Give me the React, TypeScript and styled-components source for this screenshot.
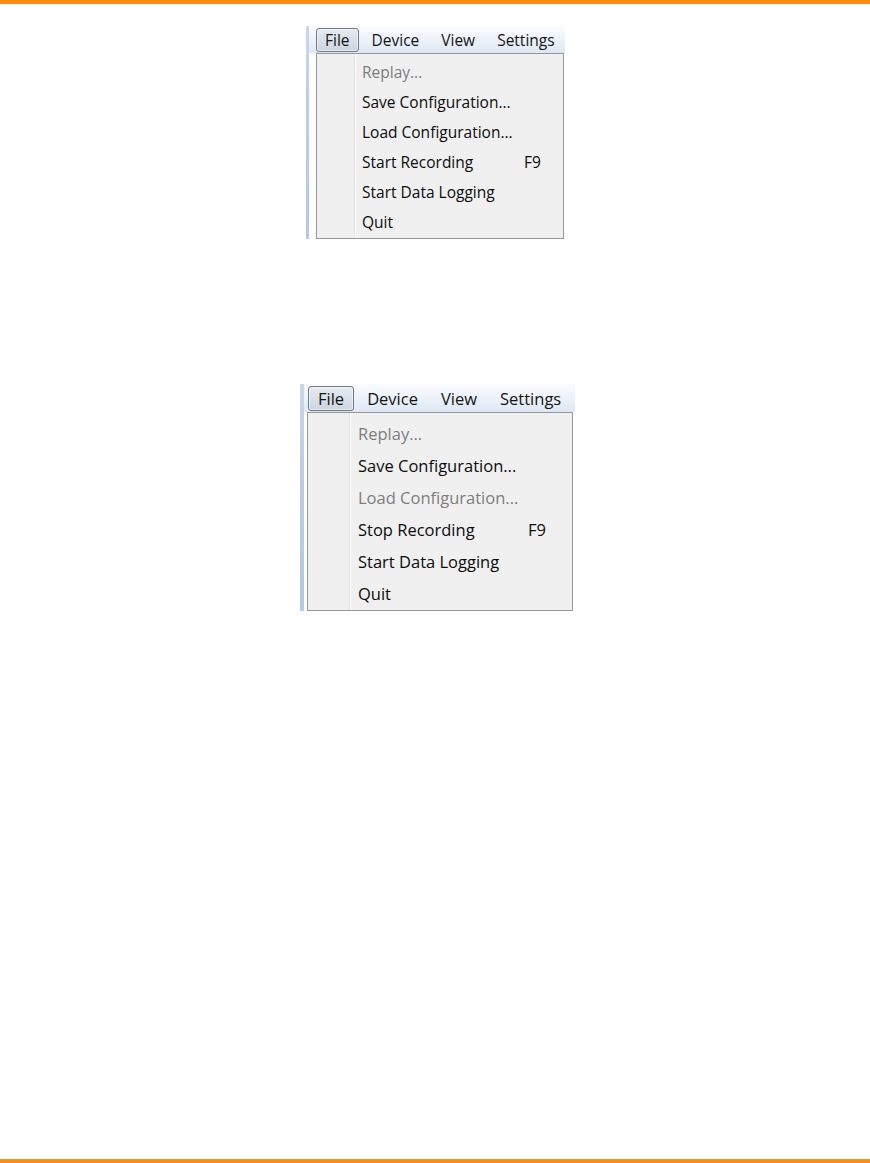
import React from "react";
import styled, { createGlobalStyle } from "styled-components";

const GlobalStyle = createGlobalStyle`
  html, body { margin: 0; padding: 0; background: #ffffff; }
  body { font-family: "Open Sans", "Noto Sans", sans-serif; }
`;

type Cfg = {
  font: number;
  barH: number;
  stripW: number;
  barW: number;
  ddInset: number;
  ddW: number;
  rowH: number;
  padTop: number;
  padBottom: number;
  sepX: number;
  textX: number;
  labelW: number;
  itemPad: number;
  itemGap: number;
  firstInset: number;
};

const Page = styled.div`
  width: 870px;
  height: 1163px;
  display: flex;
  flex-direction: column;
  box-sizing: border-box;
  border-top: 4px solid #ff8a14;
  border-bottom: 4px solid #ff8a14;
`;

const Section = styled.div<{ $top: number; $left: number }>`
  margin-top: ${(p) => p.$top}px;
  margin-left: ${(p) => p.$left}px;
  display: flex;
`;

const Strip = styled.div<{ $w: number }>`
  width: ${(p) => p.$w}px;
  background: linear-gradient(to bottom, #c9d8ec 0%, #b9cde6 40%, #b4c9e4 100%);
`;

const Column = styled.div`
  display: flex;
  flex-direction: column;
`;

const Bar = styled.div<{ $h: number; $w: number; $gap: number; $inset: number }>`
  height: ${(p) => p.$h}px;
  width: ${(p) => p.$w}px;
  display: flex;
  align-items: center;
  gap: ${(p) => p.$gap}px;
  padding-left: ${(p) => p.$inset}px;
  box-sizing: border-box;
  background: linear-gradient(to bottom, #fbfcfe 0%, #eef3fa 45%, #dde7f4 100%);
`;

const BarItem = styled.div<{ $active?: boolean; $pad: number; $font: number }>`
  height: calc(100% - 3px);
  display: flex;
  align-items: center;
  box-sizing: border-box;
  padding: 0 ${(p) => p.$pad}px;
  font-size: ${(p) => p.$font}px;
  color: #141414;
  white-space: nowrap;
  border-radius: 3px;
  border: 1px solid ${(p) => (p.$active ? "#6f7884" : "transparent")};
  background: ${(p) =>
    p.$active
      ? "linear-gradient(to bottom, #e6ebf1 0%, #d9e0e8 50%, #cdd5df 100%)"
      : "transparent"};
  box-shadow: ${(p) => (p.$active ? "inset 0 0 0 1px rgba(255,255,255,0.55)" : "none")};
`;

const Dropdown = styled.div<{ $inset: number; $w: number; $pt: number; $pb: number; $sep: number }>`
  margin-left: ${(p) => p.$inset}px;
  width: ${(p) => p.$w}px;
  box-sizing: border-box;
  border: 1px solid #979797;
  padding: ${(p) => p.$pt}px 0 ${(p) => p.$pb}px 0;
  background-color: #f0f0f0;
  background-image: linear-gradient(#e2e3e3, #e2e3e3), linear-gradient(#ffffff, #ffffff);
  background-size: 1px 100%, 1px 100%;
  background-position: ${(p) => p.$sep - 1}px 0, ${(p) => p.$sep}px 0;
  background-repeat: no-repeat;
`;

const Row = styled.div<{ $h: number; $x: number; $lw: number; $font: number; $disabled?: boolean }>`
  height: ${(p) => p.$h}px;
  display: grid;
  grid-template-columns: ${(p) => p.$lw}px auto;
  align-items: center;
  padding-left: ${(p) => p.$x - 1}px;
  font-size: ${(p) => p.$font}px;
  color: ${(p) => (p.$disabled ? "#7d7d7d" : "#0c0c0c")};
  white-space: nowrap;
`;

const Label = styled.span``;
const Shortcut = styled.span``;

type Item = { label: string; shortcut?: string; disabled?: boolean };

const Menu: React.FC<{ cfg: Cfg; items: Item[]; top: number; left: number }> = ({
  cfg,
  items,
  top,
  left,
}) => (
  <Section $top={top} $left={left}>
    <Strip $w={cfg.stripW} />
    <Column>
      <Bar $h={cfg.barH} $w={cfg.barW} $gap={cfg.itemGap} $inset={cfg.firstInset}>
        {["File", "Device", "View", "Settings"].map((m, i) => (
          <BarItem key={m} $active={i === 0} $pad={cfg.itemPad} $font={cfg.font}>
            {m}
          </BarItem>
        ))}
      </Bar>
      <Dropdown $inset={cfg.ddInset} $w={cfg.ddW} $pt={cfg.padTop} $pb={cfg.padBottom} $sep={cfg.sepX}>
        {items.map((it) => (
          <Row
            key={it.label}
            $h={cfg.rowH}
            $x={cfg.textX}
            $lw={cfg.labelW}
            $font={cfg.font}
            $disabled={it.disabled}
          >
            <Label>{it.label}</Label>
            {it.shortcut ? <Shortcut>{it.shortcut}</Shortcut> : null}
          </Row>
        ))}
      </Dropdown>
    </Column>
  </Section>
);

const cfgA: Cfg = {
  font: 15.5,
  barH: 27,
  stripW: 3,
  barW: 256,
  ddInset: 7,
  ddW: 248,
  rowH: 30,
  padTop: 3,
  padBottom: 1,
  sepX: 38,
  textX: 46,
  labelW: 162,
  itemPad: 8,
  itemGap: 4,
  firstInset: 7,
};

const cfgB: Cfg = {
  font: 16.5,
  barH: 28,
  stripW: 4,
  barW: 271,
  ddInset: 3,
  ddW: 266,
  rowH: 32,
  padTop: 4,
  padBottom: 1,
  sepX: 42,
  textX: 51,
  labelW: 170,
  itemPad: 9,
  itemGap: 3,
  firstInset: 4,
};

const itemsA: Item[] = [
  { label: "Replay...", disabled: true },
  { label: "Save Configuration..." },
  { label: "Load Configuration..." },
  { label: "Start Recording", shortcut: "F9" },
  { label: "Start Data Logging" },
  { label: "Quit" },
];

const itemsB: Item[] = [
  { label: "Replay...", disabled: true },
  { label: "Save Configuration..." },
  { label: "Load Configuration...", disabled: true },
  { label: "Stop Recording", shortcut: "F9" },
  { label: "Start Data Logging" },
  { label: "Quit" },
];

export default function App() {
  return (
    <>
      <GlobalStyle />
      <Page>
        <Menu cfg={cfgA} items={itemsA} top={22} left={306} />
        <Menu cfg={cfgB} items={itemsB} top={145} left={300} />
      </Page>
    </>
  );
}
